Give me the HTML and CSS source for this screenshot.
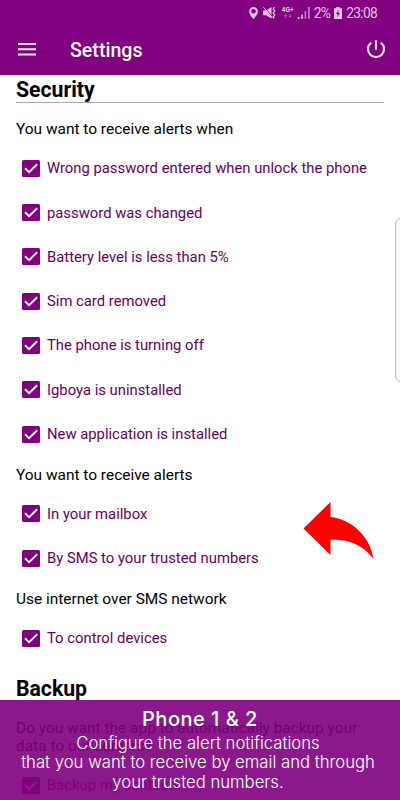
FILE: index.html
```
<!DOCTYPE html>
<html lang="en">
<head>
  <meta charset="utf-8">
  <title>Settings</title>
  <link rel="stylesheet" href="styles.css">
</head>
<body>

  <!-- check mark used by every option -->
  <svg class="defs" width="0" height="0">
    <symbol id="tick" viewBox="0 0 18 17">
      <path d="M3 8.2 L7.1 12.2 L15.2 4.2" fill="none" stroke="currentColor" stroke-width="1.9"/>
    </symbol>
  </svg>

  <header class="top">
    <div class="status">
      <svg class="pin" width="9" height="12" viewBox="0 0 9 12"><path fill-rule="evenodd" d="M4.5 0A4.4 4.4 0 0 0 .1 4.4C.1 7.4 4.5 12 4.5 12S8.9 7.4 8.9 4.4A4.4 4.4 0 0 0 4.5 0zM4.5 2A2.3 2.3 0 1 1 4.5 6.6A2.3 2.3 0 1 1 4.5 2z"/></svg>
      <svg class="mute" width="13" height="12" viewBox="0 0 13 12">
        <path d="M0 3.5h3L8.5 0v11.5L3 8.3H0z"/>
        <path d="M1 0l9 10.5" stroke="#800080" stroke-width="1"/>
        <path d="M.3 0l9 10.8" stroke="#e6c4e6" stroke-width="1"/>
        <path d="M11.5 0l-1.3 2 1.5 2-1.5 2 1.5 2-1.5 2 1 1.5" fill="none" stroke="#e6c4e6" stroke-width="1.3"/>
      </svg>
      <span class="net"><b>4G+</b><svg width="8" height="4" viewBox="0 0 8 4" opacity=".5"><path d="M0 2L1.5 0 3 2H2v2H1V2zM4.5 2h1V0h1v2h1L6 4z"/></svg></span>
      <svg class="signal" width="12" height="12" viewBox="0 0 12 12"><path d="M0 10h1.5v2H0zM3.3 7.5h1.5V12H3.3z"/><path d="M6.6 4h1.6v8H6.6zM10 0h1.7v12H10z" opacity=".65"/></svg>
      <span class="percent">2%</span>
      <svg class="battery" width="8" height="12" viewBox="0 0 8 12"><path d="M2.3 0h3.4v1.3H8V12H0V1.3h2.3z"/><path d="M4.8 2.8L2 7h1.8L3 10.5 6 6H4.2z" fill="#800080"/></svg>
      <span class="clock">23:08</span>
    </div>
    <div class="bar">
      <svg width="18" height="13" viewBox="0 0 18 13"><path d="M0 0h18v2H0zM0 5.3h18v2H0zM0 10.4h18v2H0z"/></svg>
      <h1>Settings</h1>
      <svg class="power" width="20" height="20" viewBox="0 0 20 20"><path d="M10 1.2v9.5M5.2 3.7A8 8 0 1 0 14.8 3.7" fill="none" stroke="#f8e6f8" stroke-width="2.1"/></svg>
    </div>
  </header>

  <main class="page">
    <h2 class="ruled">Security</h2>

    <p class="question">You want to receive alerts when</p>
    <div class="option"><svg class="box"><use href="#tick"/></svg><span>Wrong password entered when unlock the phone</span></div>
    <div class="option"><svg class="box"><use href="#tick"/></svg><span>password was changed</span></div>
    <div class="option"><svg class="box"><use href="#tick"/></svg><span>Battery level is less than 5%</span></div>
    <div class="option"><svg class="box"><use href="#tick"/></svg><span>Sim card removed</span></div>
    <div class="option"><svg class="box"><use href="#tick"/></svg><span>The phone is turning off</span></div>
    <div class="option"><svg class="box"><use href="#tick"/></svg><span>Igboya is uninstalled</span></div>
    <div class="option"><svg class="box"><use href="#tick"/></svg><span>New application is installed</span></div>

    <p class="question">You want to receive alerts</p>
    <div class="option"><svg class="box"><use href="#tick"/></svg><span>In your mailbox</span></div>
    <div class="option"><svg class="box"><use href="#tick"/></svg><span>By SMS to your trusted numbers</span></div>

    <p class="question">Use internet over SMS network</p>
    <div class="option"><svg class="box"><use href="#tick"/></svg><span>To control devices</span></div>

    <h2 class="backup">Backup</h2>
    <p class="question long">Do you want the app to automatically backup your data to our servers?</p>
    <div class="option"><svg class="box"><use href="#tick"/></svg><span>Backup my contacts</span></div>
  </main>

  <div class="edge"></div>

  <svg class="arrow" width="72" height="58" viewBox="0 0 72 58">
    <path d="M.5 26.5L27.5 0V15C48 17 67 34 70.5 57C60 43 47 37.5 27.5 37.5V53z" fill="#f00"/>
  </svg>

  <div class="caption">
    <h3>Phone 1 &amp; 2</h3>
    <p>Configure the alert notifications<br>that you want to receive by email and through<br>your trusted numbers.</p>
  </div>

</body>
</html>
```
FILE: styles.css
```
* {
  box-sizing: border-box;
}

body {
  margin: 0;
  width: 400px;
  height: 800px;
  overflow: hidden;
  position: relative;
  background: #fff;
  color: #000;
  font-family: Roboto, sans-serif;
}

h1, h2, h3, p {
  margin: 0;
}

.defs {
  position: absolute;
}

.top {
  height: 75px;
  background: #800080;
  color: #fff;
}

.status {
  display: flex;
  align-items: center;
  justify-content: flex-end;
  height: 25px;
  padding-right: 23px;
  font-size: 13.8px;
  letter-spacing: -.7px;
  color: #e6c4e6;
  fill: #e6c4e6;
}

.pin {
  margin-right: 5px;
}

.mute {
  margin-right: 6px;
}

.net {
  display: flex;
  flex-direction: column;
  align-items: center;
  width: 12px;
  margin-right: 4px;
  font-size: 6.5px;
  line-height: 7px;
  letter-spacing: 0;
}

.signal {
  margin-right: 4px;
}

.percent {
  margin-right: 4px;
}

.battery {
  margin-right: 4px;
}

.bar {
  display: flex;
  align-items: center;
  height: 50px;
  padding: 0 14px 2px 18px;
  fill: #f8e6f8;
}

.bar h1 {
  flex: 1;
  margin-left: 34px;
  padding-top: 2px;
  font-size: 19.6px;
  font-weight: 500;
}

.page {
  padding: 0 16px;
}

h2 {
  font-size: 21.2px;
  line-height: 30px;
  font-weight: 700;
}

.ruled {
  height: 28px;
  margin-bottom: 7.5px;
  border-bottom: 1px solid #aaa;
}

.question {
  display: flex;
  align-items: center;
  height: 35.6px;
  padding-top: 2px;
  font-size: 15.45px;
  line-height: 18px;
}

.option {
  display: flex;
  align-items: center;
  height: 44.3px;
  padding-left: 6px;
  color: #660066;
  font-size: 14.82px;
}

.box {
  width: 18px;
  height: 17px;
  margin-right: 7px;
  border-radius: 1.5px;
  background: #800080;
  color: #fff;
}

.backup {
  margin-top: 14px;
}

.long {
  height: 54px;
  margin-top: 5px;
}

/* side panel handle, mostly off screen */
.edge {
  position: absolute;
  top: 218px;
  right: -10px;
  width: 15px;
  height: 164px;
  border: 1px solid #bbb;
  border-radius: 6px;
  background: #fafafa;
}

.arrow {
  position: absolute;
  left: 303px;
  top: 502px;
}

.caption {
  position: absolute;
  left: 0;
  right: 0;
  bottom: 0;
  height: 100px;
  padding-top: 8px;
  background: rgba(128, 0, 128, .9);
  color: #fff;
  text-align: center;
  font-family: Inter, "Liberation Sans", sans-serif;
}

.caption h3 {
  font-size: 20px;
  line-height: 23px;
  font-weight: 500;
  letter-spacing: .5px;
}

.caption p {
  padding-top: 3px;
  padding-right: 4px;
  font-size: 16.7px;
  line-height: 19.4px;
  font-weight: 300;
}
```
